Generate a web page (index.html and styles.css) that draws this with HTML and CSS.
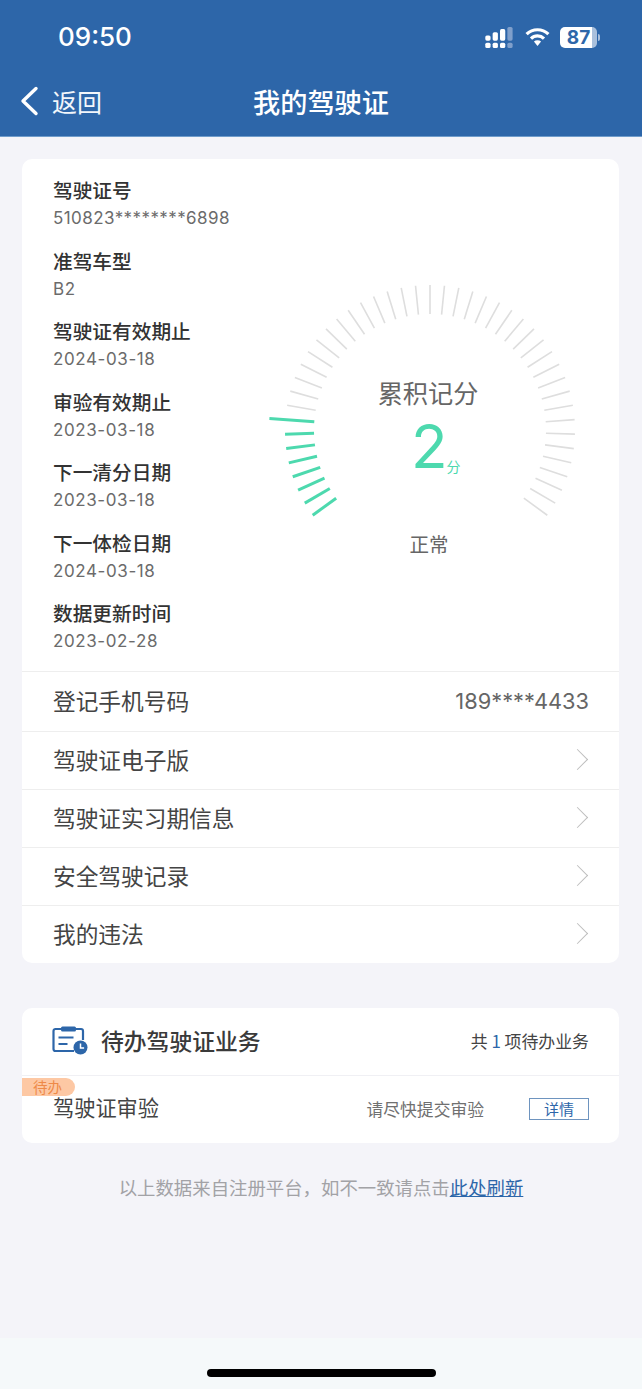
FILE: index.html
```html
<!DOCTYPE html>
<html lang="zh-CN">
<head>
  <meta charset="UTF-8" />
  <meta name="viewport" content="width=device-width, initial-scale=1.0" />
  <title>我的驾驶证</title>
  <link rel="stylesheet" href="styles.css">
</head>
<body>

  <header class="topbar">
    <div class="status">
      <span class="clock">09:50</span>
      <div class="status-icons">
        <svg class="signal" width="30" height="21" viewBox="0 0 28 20">
          <g fill="#fff">
            <rect x="0" y="8" width="5" height="5" rx="1.5"/>
            <rect x="0" y="15" width="5" height="5" rx="1.5"/>
            <rect x="7" y="5" width="5" height="8" rx="1.5"/>
            <rect x="7" y="15" width="5" height="5" rx="1.5"/>
            <rect x="14" y="2" width="5" height="11" rx="1.5"/>
            <rect x="14" y="15" width="5" height="5" rx="1.5"/>
          </g>
          <g fill="#7f9fcb">
            <rect x="21" y="0" width="5" height="13" rx="1.5"/>
            <rect x="21" y="15" width="5" height="5" rx="1.5"/>
          </g>
        </svg>
        <svg class="wifi" width="25" height="20" viewBox="0 0 25 20">
          <g fill="none" stroke="#fff" stroke-width="3.2">
            <path d="M1.6 7.2a15.6 15.6 0 0 1 21.8 0"/>
            <path d="M6 11.6a9.3 9.3 0 0 1 13 0"/>
          </g>
          <path d="M8.9 14.6a5.2 5.2 0 0 1 7.2 0l-3.6 4.4z" fill="#fff"/>
        </svg>
        <div class="battery">
          <span class="battery-level">87</span>
          <i class="battery-tip"></i>
        </div>
      </div>
    </div>
    <div class="navbar">
      <a class="back">
        <svg width="20" height="30" viewBox="0 0 20 30">
          <path d="M17 2.5 4 15l13 12.5" fill="none" stroke="#fff" stroke-width="3.4" stroke-linecap="round" stroke-linejoin="round"/>
        </svg>
        <span>返回</span>
      </a>
      <h1>我的驾驶证</h1>
    </div>
  </header>

  <main class="content">
    <section class="card">
      <div class="license">
        <ul class="info-list">
          <li><b>驾驶证号</b><span class="id-no">510823********6898</span></li>
          <li><b>准驾车型</b><span>B2</span></li>
          <li><b>驾驶证有效期止</b><span>2024-03-18</span></li>
          <li><b>审验有效期止</b><span>2023-03-18</span></li>
          <li><b>下一清分日期</b><span>2023-03-18</span></li>
          <li><b>下一体检日期</b><span>2024-03-18</span></li>
          <li><b>数据更新时间</b><span>2023-02-28</span></li>
        </ul>
        <div class="gauge">
          <svg id="gaugeTicks" width="330" height="250" viewBox="0 0 330 250"></svg>
          <div class="gauge-title">累积记分</div>
          <div class="gauge-score"><strong>2</strong><small>分</small></div>
          <div class="gauge-status">正常</div>
        </div>
      </div>
      <div class="row"><span>登记手机号码</span><em class="phone">189****4433</em></div>
      <div class="row"><span>驾驶证电子版</span><i class="chevron"></i></div>
      <div class="row"><span>驾驶证实习期信息</span><i class="chevron"></i></div>
      <div class="row"><span>安全驾驶记录</span><i class="chevron"></i></div>
      <div class="row"><span>我的违法</span><i class="chevron"></i></div>
    </section>

    <section class="card todo">
      <div class="todo-head">
        <div class="todo-title">
          <svg width="36" height="29" viewBox="0 0 36 29">
            <path d="M9 3H3.5A2 2 0 0 0 1.5 5v18a2 2 0 0 0 2 2H22M24 3h5a2 2 0 0 1 2 2v9" fill="none" stroke="#2d66a9" stroke-width="2.2"/>
            <rect x="9" y="0.5" width="15" height="5" rx="1.5" fill="#2d66a9"/>
            <path d="M6.5 11.5h15M6.5 18h9" stroke="#2d66a9" stroke-width="2.2"/>
            <circle cx="28.5" cy="21.5" r="7" fill="#2d66a9"/>
            <path d="M28.5 17.5v4.5h3.6" fill="none" stroke="#fff" stroke-width="1.5"/>
          </svg>
          <h2>待办驾驶证业务</h2>
        </div>
        <div class="todo-count">共 <em>1</em> 项待办业务</div>
      </div>
      <div class="todo-row">
        <span class="todo-tag">待办</span>
        <span class="todo-name">驾驶证审验</span>
        <span class="todo-hint">请尽快提交审验</span>
        <a class="todo-btn">详情</a>
      </div>
    </section>

    <p class="note">以上数据来自注册平台，如不一致请点击<a>此处刷新</a></p>
  </main>

  <footer class="homebar"><i></i></footer>

  <script src="gauge.js"></script>
</body>
</html>
```

FILE: styles.css
```css
* {
  box-sizing: border-box;
}

body {
  margin: 0;
  height: 1389px;
  display: flex;
  flex-direction: column;
  overflow: hidden;
  background-color: #f4f4f9;
  font-family: "Noto Sans CJK SC", "Liberation Sans", sans-serif;
  color: #333;
}

ul, h1, h2, p {
  margin: 0;
  padding: 0;
}

em {
  font-style: normal;
}

/* top bar */
.topbar {
  height: 137px;
  background-color: #2d66a9;
  color: #fff;
  border-bottom: 1px solid #6f9ccb;
}

.status {
  height: 74px;
  padding: 19px 42px 0 58px;
  display: flex;
  justify-content: space-between;
  align-items: flex-start;
}

.clock {
  font-family: Inter, sans-serif;
  font-size: 26px;
  font-weight: 500;
  line-height: 36px;
}

.status-icons {
  display: flex;
  align-items: center;
  gap: 10px;
  height: 36px;
}

.battery {
  display: flex;
  align-items: center;
  gap: 1px;
}

.battery-level {
  width: 37px;
  height: 21px;
  border-radius: 5px;
  background: linear-gradient(to right, #fff 87%, #a9c0dc 87%);
  color: #2d66a9;
  font-family: Inter, sans-serif;
  font-size: 19px;
  font-weight: 700;
  line-height: 21px;
  text-align: center;
}

.battery-tip {
  width: 2px;
  height: 7px;
  border-radius: 0 2px 2px 0;
  background-color: #a9c0dc;
}

.navbar {
  height: 62px;
  display: grid;
  grid-template-columns: 1fr auto 1fr;
  align-items: center;
  padding-bottom: 8px;
}

.back {
  display: flex;
  align-items: center;
  gap: 13px;
  padding-left: 19px;
  font-size: 25px;
  color: #f2f6fb;
}

.navbar h1 {
  grid-column: 2;
  font-size: 27.2px;
  font-weight: 500;
}

/* cards */
.content {
  flex: 1;
  padding: 22px 23px 0 22px;
}

.card {
  background: #fff;
  border-radius: 10px;
}

.license {
  height: 512px;
  padding: 16px 0 0 31px;
  display: flex;
}

.info-list {
  list-style: none;
  width: 200px;
}

.info-list li {
  height: 70.5px;
  display: flex;
  flex-direction: column;
}

.info-list b {
  font-size: 19.7px;
  font-weight: 500;
  line-height: 29px;
  color: #333;
  white-space: nowrap;
}

.info-list span {
  font-family: Inter, "Liberation Sans", sans-serif;
  font-size: 17px;
  line-height: 29px;
  letter-spacing: 0.6px;
  color: #6b6b6b;
  white-space: nowrap;
}

.info-list .id-no {
  letter-spacing: 0.42px;
}

/* the ticks are a drawing; the labels sit on top of it */
.gauge {
  position: relative;
  width: 330px;
  height: 300px;
  margin: 110px 0 0 12px;
}

.gauge-title {
  position: absolute;
  top: 89px;
  left: 0;
  width: 326px;
  text-align: center;
  font-size: 25.2px;
  line-height: 36px;
  color: #666;
}

.gauge-score {
  position: absolute;
  top: 123px;
  left: 146px;
  display: flex;
  align-items: flex-end;
  color: #4dd9ae;
}

.gauge-score strong {
  font-family: Inter, sans-serif;
  font-size: 60px;
  font-weight: 400;
  line-height: 76px;
}

.gauge-score small {
  font-size: 14px;
  line-height: 20px;
  margin-bottom: 8px;
  margin-left: -1px;
}

.gauge-status {
  position: absolute;
  top: 244px;
  left: 1px;
  width: 326px;
  text-align: center;
  font-size: 19.5px;
  line-height: 30px;
  color: #666;
}

.row {
  height: 58px;
  padding: 0 30px 2px 31px;
  border-top: 1px solid #eeeeee;
  display: flex;
  justify-content: space-between;
  align-items: center;
  font-size: 22.7px;
  color: #444;
}

.license + .row {
  height: 60px;
}

.phone {
  font-family: Inter, "Liberation Sans", sans-serif;
  font-size: 21.8px;
  color: #666;
}

.chevron {
  width: 15px;
  height: 15px;
  margin-right: 4px;
  border-top: 1.6px solid #bdbdbd;
  border-right: 1.6px solid #bdbdbd;
  transform: rotate(45deg);
}

/* pending business */
.todo {
  margin-top: 45px;
}

.todo-head {
  height: 68px;
  padding: 0 30px 2px;
  border-bottom: 1px solid #f0f0f4;
  display: flex;
  justify-content: space-between;
  align-items: center;
}

.todo-title {
  display: flex;
  align-items: center;
  gap: 13px;
}

.todo-title h2 {
  font-size: 22.8px;
  font-weight: 500;
  color: #3a3a3a;
}

.todo-count {
  font-size: 16.9px;
  color: #444;
}

.todo-count em {
  color: #2d66a9;
}

.todo-row {
  position: relative;
  height: 67px;
  padding: 0 30px 2px 31px;
  display: flex;
  align-items: center;
}

.todo-tag {
  position: absolute;
  top: 2px;
  left: 0;
  width: 53px;
  height: 18px;
  padding-left: 11px;
  border-radius: 0 9px 9px 0;
  background-color: #fdc8a4;
  color: #ee8a48;
  font-size: 14.5px;
  line-height: 18px;
}

.todo-name {
  flex: 1;
  margin-bottom: 5px;
  font-size: 21.2px;
  color: #444;
}

.todo-hint {
  margin-right: 45px;
  font-size: 16.8px;
  color: #707070;
}

.todo-btn {
  width: 60px;
  height: 22px;
  border: 1px solid #6e94bf;
  color: #2d66a9;
  font-size: 15px;
  line-height: 20px;
  text-align: center;
}

.note {
  margin-top: 29px;
  padding-left: 1px;
  text-align: center;
  font-size: 18.4px;
  line-height: 30px;
  color: #a2a2a6;
}

.note a {
  color: #2d66a9;
  text-decoration: underline;
}

.homebar {
  height: 51px;
  padding-top: 31px;
  background-color: #f5f9fa;
  display: flex;
  justify-content: center;
}

.homebar i {
  width: 229px;
  height: 8px;
  border-radius: 4px;
  background-color: #000;
}
```

FILE: gauge.js
```js
// 45 ticks, sweeping from lower left over the top to lower right
var svg = document.getElementById("gaugeTicks");
var NS = "http://www.w3.org/2000/svg";
var cx = 165, cy = 145;
var step = 252 / 44;

for (var i = 0; i < 45; i++) {
  var angle = (216 - i * step) * Math.PI / 180;
  var green = i < 8;
  var outer = i === 7 ? 161 : 145;

  var line = document.createElementNS(NS, "line");
  line.setAttribute("x1", cx + 116 * Math.cos(angle));
  line.setAttribute("y1", cy - 116 * Math.sin(angle));
  line.setAttribute("x2", cx + outer * Math.cos(angle));
  line.setAttribute("y2", cy - outer * Math.sin(angle));
  line.setAttribute("stroke", green ? "#4dd9ae" : "#dedede");
  line.setAttribute("stroke-width", green ? 3 : 1.6);
  svg.appendChild(line);
}
```
